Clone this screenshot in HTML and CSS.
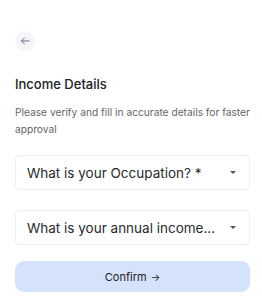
FILE: index.html
```html
<!DOCTYPE html>
<html>
<head>
<meta charset="utf-8">
<link rel="stylesheet" href="styles.css">
</head>
<body>
<div class="page">
  <button class="back" aria-label="Back">
    <svg width="10" height="10" viewBox="0 0 10 10"><path d="M9 5H1.5M4.5 2L1.5 5L4.5 8" fill="none" stroke="#6d6a99" stroke-width="1" stroke-linecap="round" stroke-linejoin="round"/></svg>
  </button>
  <h1 class="title">Income Details</h1>
  <p class="desc">Please verify and fill in accurate details for faster approval</p>
  <div class="select"><span class="label">What is your Occupation? *</span><span class="caret"></span></div>
  <div class="select second"><span class="label">What is your annual income...</span><span class="caret"></span></div>
  <button class="confirm">Confirm <span class="arrow">→</span></button>
</div>
</body>
</html>
```
FILE: styles.css
```css
* { box-sizing: border-box; }
body { margin: 0; background: #fff; font-family: "Inter", "Lato", sans-serif; }
.page { padding: 31px 12px 0 15px; display: flex; flex-direction: column; }
.back { width: 20px; height: 20px; border-radius: 50%; border: none; background: #f6f6f9; display: flex; align-items: center; justify-content: center; padding: 0; margin-left: 0; }
.title { margin: 24px 0 0; font-size: 13px; font-weight: 500; color: #222; line-height: 18px; }
.desc { margin: 11px 0 0; font-size: 10.2px; line-height: 17px; color: #666; }
.select { height: 35px; border: 1px solid #efeff2; border-radius: 4px; display: flex; align-items: center; justify-content: space-between; padding: 0 13px 0 11px; margin-top: 17px; }
.select.second { margin-top: 20px; }
.label { font-size: 13.5px; color: #2a2a2a; }
.caret { width: 0; height: 0; border-left: 3.5px solid transparent; border-right: 3.5px solid transparent; border-top: 3.5px solid #555; }
.confirm { margin-top: 16px; height: 31px; border: none; border-radius: 9px; background: #d5e2fc; font-family: inherit; font-size: 11px; color: #222; font-weight: 400; display: flex; align-items: center; justify-content: center; gap: 4px; }
.arrow { font-size: 10px; }
```
